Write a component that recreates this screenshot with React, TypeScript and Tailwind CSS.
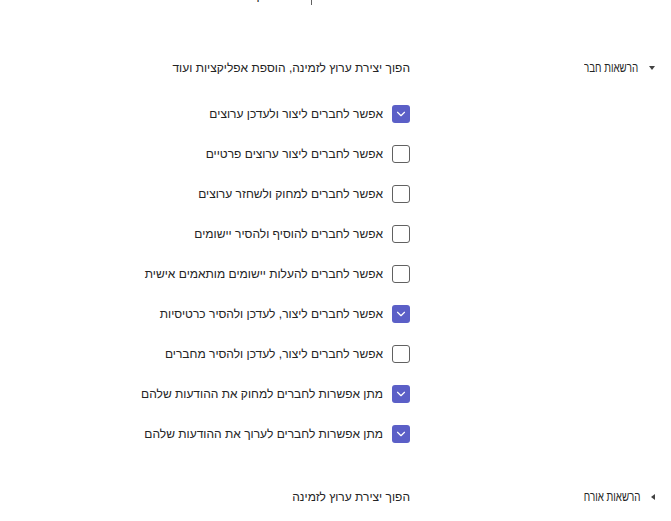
import { ChevronDown } from 'lucide-react'

const items = [
  { label: 'אפשר לחברים ליצור ולעדכן ערוצים', checked: true },
  { label: 'אפשר לחברים ליצור ערוצים פרטיים', checked: false },
  { label: 'אפשר לחברים למחוק ולשחזר ערוצים', checked: false },
  { label: 'אפשר לחברים להוסיף ולהסיר יישומים', checked: false },
  { label: 'אפשר לחברים להעלות יישומים מותאמים אישית', checked: false },
  { label: 'אפשר לחברים ליצור, לעדכן ולהסיר כרטיסיות', checked: true },
  { label: 'אפשר לחברים ליצור, לעדכן ולהסיר מחברים', checked: false },
  { label: 'מתן אפשרות לחברים למחוק את ההודעות שלהם', checked: true },
  { label: 'מתן אפשרות לחברים לערוך את ההודעות שלהם', checked: true },
]

function Checkbox({ checked }: { checked: boolean }) {
  if (checked) {
    return (
      <div className="w-[18px] h-[18px] rounded-[3px] bg-[#5b5fc7] flex items-center justify-center shrink-0">
        <ChevronDown className="w-[14px] h-[14px] text-white" strokeWidth={2} />
      </div>
    )
  }
  return <div className="w-[18px] h-[18px] rounded-[3px] border border-[#616161] bg-white shrink-0" />
}

function SectionHeader({ title, desc, open }: { title: string; desc: string; open: boolean }) {
  return (
    <div className="flex items-center h-[20px]">
      <div className="w-[245px] flex items-center shrink-0">
        <span
          className={
            open
              ? 'w-0 h-0 border-l-[3px] border-r-[3px] border-t-[4px] border-l-transparent border-r-transparent border-t-[#424242] ml-[11px]'
              : 'w-0 h-0 border-t-[3px] border-b-[3px] border-r-[4px] border-t-transparent border-b-transparent border-r-[#424242] ml-[11px]'
          }
        />
        <span className="inline-block origin-right scale-x-[0.75] text-[13px]">{title}</span>
      </div>
      <span>{desc}</span>
    </div>
  )
}

export default function App() {
  return (
    <div
      dir="rtl"
      className="w-[671px] h-[521px] overflow-hidden bg-white text-[#242424] text-[12px] pr-[16px]"
      style={{ fontFamily: '"Liberation Sans", "DejaVu Sans", sans-serif' }}
    >
      <div className="flex items-start h-[8px] -mt-[11px] mr-[343px]">
        <div className="w-px h-[16px] bg-[#616161] ml-[7px]" />
        <span className="leading-[14px]">הגדרות קבוצה</span>
      </div>

      <div className="mt-[61px]">
        <SectionHeader title="הרשאות חבר" desc="הפוך יצירת ערוץ לזמינה, הוספת אפליקציות ועוד" open />
      </div>

      <div className="mr-[245px] mt-[27px] flex flex-col gap-[22px]">
        {items.map((it) => (
          <div key={it.label} className="flex items-center gap-[9px] h-[18px]">
            <Checkbox checked={it.checked} />
            <span>{it.label}</span>
          </div>
        ))}
      </div>

      <div className="mt-[44px]">
        <SectionHeader title="הרשאות אורח" desc="הפוך יצירת ערוץ לזמינה" open={false} />
      </div>
    </div>
  )
}
